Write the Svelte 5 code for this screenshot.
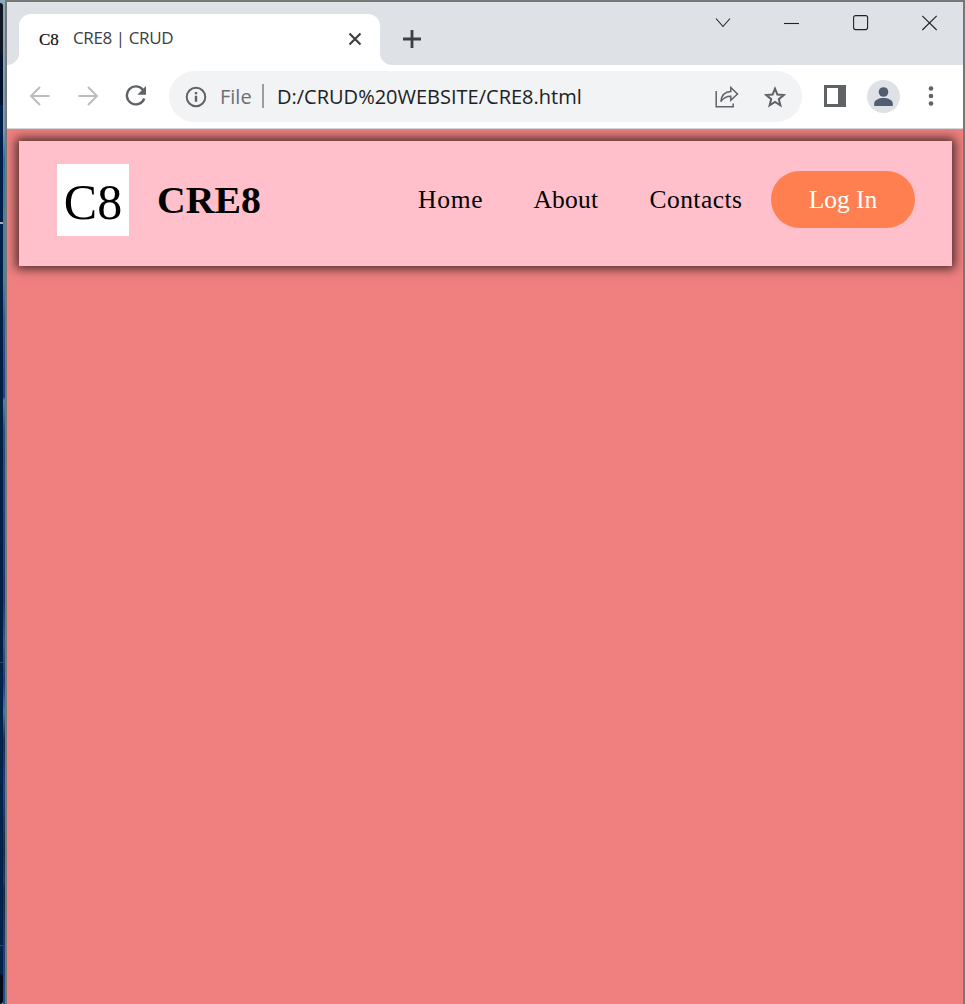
<script>
  const links = [
    { label: 'Home', width: 65, gap: 50.5, spacing: 0.75 },
    { label: 'About', width: 65, gap: 51, spacing: 0.2 },
    { label: 'Contacts', width: 93, gap: 28.5, spacing: 0.45 }
  ];
</script>

<div class="desktop">
  <div class="wall"></div>
  <div class="glass"></div>
  <div class="window">
    <header class="tabs">
      <svg class="foot" width="12" height="12" viewBox="0 0 12 12"><path d="M12 0v12H0A12 12 0 0 0 12 0z" fill="#fff" /></svg>
      <div class="tab">
        <span class="favicon">C8</span>
        <span class="title">CRE8 | CRUD</span>
        <svg class="close" width="14" height="14" viewBox="0 0 14 14"><path d="M1.500 1.500l11 11M12.500 1.500l-11 11" stroke="#3c4043" stroke-width="2.200" fill="none" /></svg>
      </div>
      <svg class="foot" width="12" height="12" viewBox="0 0 12 12"><path d="M0 0v12h12A12 12 0 0 1 0 0z" fill="#fff" /></svg>
      <svg class="plus" width="20" height="20" viewBox="0 0 20 20"><path d="M10 1v18M1 10h18" stroke="#3c4043" stroke-width="2.800" /></svg>
      <div class="controls">
        <svg width="16" height="16" viewBox="0 0 16 16"><path d="M1 5.500l7 8L15 5.500" transform="translate(0 -1)" /></svg>
        <svg width="16" height="16" viewBox="0 0 16 16"><path d="M0 9.500h15" /></svg>
        <svg width="16" height="16" viewBox="0 0 16 16"><rect x=".6" y="1.600" width="14" height="14" rx="2" /></svg>
        <svg width="16" height="16" viewBox="0 0 16 16"><path d="M.3 1.800l14.400 14.200M14.700 1.800L.3 16" /></svg>
      </div>
    </header>

    <div class="toolbar">
      <svg class="back" width="22" height="20" viewBox="0 0 22 20"><path d="M20.500 10H2M11 1L2 10l9 9" stroke="#babcbe" stroke-width="2" fill="none" /></svg>
      <svg class="forward" width="22" height="20" viewBox="0 0 22 20"><path d="M1.500 10H20M11 1l9 9-9 9" stroke="#babcbe" stroke-width="2" fill="none" /></svg>
      <svg class="reload" width="22" height="22" viewBox="0 0 22 22"><path d="M18.300 5.300A9 9 0 1 0 19.300 13.500" stroke="#5f6368" stroke-width="2.400" fill="none" /><path d="M21 1v8.700h-8.700z" fill="#5f6368" /></svg>
      <div class="address">
        <svg class="info" width="22" height="22" viewBox="0 0 22 22"><circle cx="11" cy="11" r="9.300" fill="none" stroke="#5f6368" stroke-width="2" /><path d="M11 9.800v6M11 6v2.200" stroke="#5f6368" stroke-width="2.400" /></svg>
        <span class="scheme">File</span>
        <span class="rule"></span>
        <span class="url">D:/CRUD%20WEBSITE/CRE8.html</span>
        <svg class="share" width="24" height="22" viewBox="0 0 24 22"><path d="M1.200 5v15.800h17V17.500" /><path d="M5.800 15.500C6.500 9.500 10 5.800 15.800 5.500V1.500L22.500 8l-6.700 6.300V10.200C11.500 10.200 8.200 12 5.800 15.500z" /></svg>
        <svg class="star" width="22" height="22" viewBox="0 0 22 22"><path d="M11 2.700l2.400 5.900 6.300.5-4.900 4.100 1.600 6.200-5.400-3.400-5.400 3.400 1.600-6.200-4.900-4.100 6.300-.5z" fill="none" stroke="#5f6368" stroke-width="2" /></svg>
      </div>
      <svg class="panel" width="22" height="22" viewBox="0 0 22 22"><path fill-rule="evenodd" d="M0 0h22v22H0zM3 3v16h11V3z" fill="#5f6368" /></svg>
      <svg class="avatar" width="33" height="33" viewBox="0 0 33 33"><circle cx="16.500" cy="16.500" r="16.500" fill="#dee1e6" /><circle cx="16.500" cy="12" r="4.800" fill="#525d72" /><path d="M7.200 26v-2.500c0-3.600 5-5.500 9.300-5.500s9.300 1.900 9.300 5.500V26z" fill="#525d72" /></svg>
      <svg class="more" width="6" height="22" viewBox="0 0 6 22"><g fill="#5f6368"><circle cx="3" cy="3.500" r="2.300" /><circle cx="3" cy="11" r="2.300" /><circle cx="3" cy="18.500" r="2.300" /></g></svg>
    </div>

    <main>
      <nav>
        <div class="logo">C8</div>
        <div class="brand"><span>CRE8</span></div>
        <div class="links">
          {#each links as link}
            <a href="#top" style:width="{link.width}px" style:margin-right="{link.gap}px" style:letter-spacing="{link.spacing}px">{link.label}</a>
          {/each}
          <button>Log In</button>
        </div>
      </nav>
    </main>
  </div>
</div>

<style>
  * { box-sizing: border-box; }
  :global(body) { margin: 0; overflow: hidden; }
  svg { display: block; flex: none; }
  .desktop { display: flex; width: 965px; height: 1004px; overflow: hidden; background: #8caabd; }
  .wall {
    width: 3px;
    margin-top: 3px;
    border-radius: 0 3px 3px 0;
    background:
      linear-gradient(#a6adb6, #a6adb6) 0 219px / 3px 2px no-repeat,
      linear-gradient(#34465d, #34465d) 0 659px / 3px 1px no-repeat,
      linear-gradient(#34465d, #34465d) 0 942px / 3px 1px no-repeat,
      linear-gradient(#101722 0 50px, #00132b 50px 102px, #00204a 102px 220px, #001f43 300px 660px, #00234b 661px 971px, #020b18 972px);
  }
  .glass {
    width: 2px;
    background: linear-gradient(#8caabd 0, #7c99ad 130px, #347198 160px, #527f93 220px, #4c8297 280px, #315c91 320px, #263f8b 397px, #518299 400px, #285185 430px, #243577 600px, #355d88 642px, #263a73 680px, #427895 712px, #222a50 740px, #27437d 790px, #222941 850px, #263766 880px, #202642 890px, #293b68 950px, #214f90 1004px);
  }
  .window { display: flex; flex-direction: column; width: 960px; border: 2px solid #777; border-bottom: 0; background: #f08080; }
  .tabs { display: flex; align-items: flex-end; height: 63px; background: #dee1e6; }
  .tab { display: flex; align-items: center; width: 361px; height: 51px; padding: 0 18px 2px 20px; border-radius: 12px 12px 0 0; background: #fff; }
  .favicon { width: 34px; padding-top: 2px; color: #111; font: 17px/24px "Liberation Serif", serif; -webkit-text-stroke: .2px #111; }
  .title { padding-bottom: 2px; color: #3c4043; font: 400 17px/24px "Open Sans", sans-serif; letter-spacing: -.400px; white-space: nowrap; }
  .close { margin-left: auto; }
  .plus { margin: 0 0 16px 10px; }
  .controls { display: flex; align-self: flex-start; gap: 53px; margin: 12px 25px 0 auto; fill: none; stroke: #222; stroke-width: 1.1; }
  .controls svg { overflow: visible; }
  .toolbar { display: flex; align-items: center; height: 64px; padding: 0 29px 1px 22px; border-bottom: 1px solid #d4d6d9; background: #fff; }
  .forward { margin-left: 26px; }
  .reload { margin-left: 26px; }
  .address { display: flex; align-items: center; width: 633px; height: 51px; margin: 0 22px; padding: 0 16px; border-radius: 26px; background: #f1f3f4; }
  .info { margin-top: 2px; }
  .scheme { width: 32px; margin-left: 13px; padding-top: 1px; color: #6b6f74; font: 20px/28px "Open Sans", sans-serif; white-space: nowrap; }
  .rule { width: 2px; height: 24px; margin: 0 13px 0 10px; background: #9a9da1; }
  .url { padding-top: 1px; color: #202124; font: 20px/28px "Open Sans", sans-serif; white-space: nowrap; }
  .share { margin: 2px 0 0 auto; fill: none; stroke: #5f6368; stroke-width: 1.5; }
  .star { margin: 1px 0 0 25px; }
  .avatar { margin-left: 21px; }
  .more { margin-left: 28px; }
  main { flex: 1; padding: 12px 11px 0 12px; overflow: hidden; }
  nav { display: flex; height: 125px; padding: 23px 37px 0 38px; background: #ffc0cb; box-shadow: 0 0 10px 3px #4a2a2a; font-family: "Liberation Serif", serif; }
  .logo { width: 72px; height: 72px; background: #fff; color: #000; font-size: 50px; line-height: 77px; text-align: center; }
  .brand { width: 106px; margin-left: 28px; font-size: 37.500px; font-weight: 700; line-height: 74px; }
  .brand span { display: inline-block; transform: scaleX(1.06); transform-origin: left; }
  .links { display: flex; align-items: center; height: 57px; margin: 7px 0 0 auto; }
  a { color: #000; font-size: 25.500px; line-height: 57px; text-decoration: none; white-space: nowrap; }
  button { width: 144px; height: 57px; padding: 0; border: 0; border-radius: 29px; background: #ff7f50; color: #fff; font: 25.500px/57px "Liberation Serif", serif; }
</style>
